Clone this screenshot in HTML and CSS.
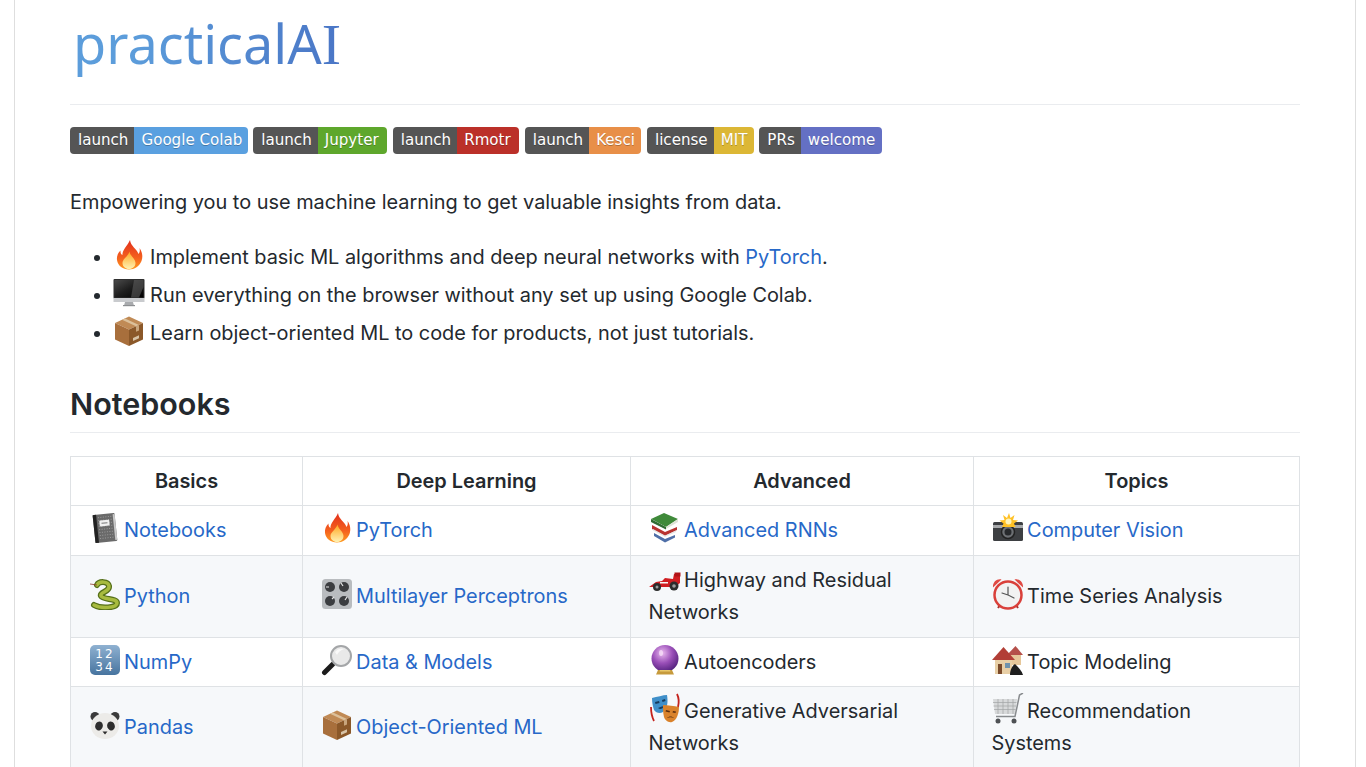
FILE: index.html
```html
<!DOCTYPE html>
<html lang="en">

<head>
    <meta charset="UTF-8">
    <meta name="viewport" content="width=device-width, initial-scale=1.0">
    <title>practicalAI</title>
    <link rel="stylesheet" href="styles.css">
</head>

<body>
    <!-- emoji drawings, used with <use> further down -->
    <svg class="sprite" xmlns="http://www.w3.org/2000/svg">
        <defs>
            <linearGradient id="flameOut" x1="0" y1="0" x2="0" y2="1">
                <stop offset="0" stop-color="#e2301c" />
                <stop offset="0.6" stop-color="#f4601e" />
                <stop offset="1" stop-color="#ff9a1f" />
            </linearGradient>
            <linearGradient id="flameIn" x1="0" y1="0" x2="0" y2="1">
                <stop offset="0" stop-color="#ffa51f" />
                <stop offset="1" stop-color="#fff2b4" />
            </linearGradient>
            <linearGradient id="screenDark" x1="0" y1="0" x2="1" y2="1">
                <stop offset="0" stop-color="#4a4a4a" />
                <stop offset="0.5" stop-color="#1d1d1d" />
                <stop offset="1" stop-color="#000" />
            </linearGradient>
            <linearGradient id="keyBlue" x1="0" y1="0" x2="0" y2="1">
                <stop offset="0" stop-color="#8fb1d1" />
                <stop offset="1" stop-color="#47749f" />
            </linearGradient>
            <radialGradient id="ballPurple" cx="0.4" cy="0.3" r="0.75">
                <stop offset="0" stop-color="#e9b8ef" />
                <stop offset="0.5" stop-color="#9a4fb8" />
                <stop offset="1" stop-color="#4c1d78" />
            </radialGradient>
        </defs>

        <symbol id="e-fire" viewBox="0 0 32 32">
            <path fill="url(#flameOut)" d="M17 1c.5 6 6.500 8.500 8.500 14 1.500-2 1.500-4 1-6 3 4 3.500 9 2 13-2 5-7 8.500-12.500 8.500-6 0-11-3.500-12-9.500-.5-4 1-7 3.500-9.500-.2 2 .5 4 2 4.500C9 11 14.500 7 17 1z" />
            <path fill="url(#flameIn)" d="M16.500 12.500c.5 4.500 6 7 6 11.500 0 3.500-3 6-6.500 6s-6.500-2.500-6.500-6c0-4 5.500-6.500 7-11.500z" />
        </symbol>

        <symbol id="e-imac" viewBox="0 0 32 32">
            <rect x="0.500" y="2" width="31" height="19.500" rx="1" fill="#303030" />
            <rect x="1.500" y="3" width="29" height="17.500" fill="url(#screenDark)" />
            <path fill="#6a6a6a" opacity="0.5" d="M21 3h9.500v7L26 20.500h-8z" />
            <rect x="0.500" y="21" width="31" height="4" fill="#c9cbce" />
            <path fill="#a9abae" d="M12 25h8l.8 3h-9.600z" />
            <rect x="10" y="28" width="12" height="1.200" fill="#8d8f92" />
        </symbol>

        <symbol id="e-box" viewBox="0 0 32 32">
            <path fill="#c08a55" d="M16 1.500 30 8 16 14.500 2 8z" />
            <path fill="#a86f3c" d="M2 8l14 6.500V31L2 24.500z" />
            <path fill="#8b5829" d="M30 8 16 14.500V31l14-6.500z" />
            <path fill="#dcc09a" d="M9 4.800l14 6.500 3-1.400-14-6.500z" />
            <path fill="#c9a57c" d="M23 11.300l3-1.400v5.500l-3 1.400z" />
            <path fill="#d8c3a6" d="M20 23l6-2.800v3l-6 2.800z" />
        </symbol>

        <symbol id="e-notebook" viewBox="0 0 32 32">
            <g transform="rotate(-6 16 16)">
                <rect x="5" y="2" width="22" height="28" rx="1" fill="#6a6a6a" />
                <rect x="5" y="2" width="3.500" height="28" fill="#222" />
                <rect x="25" y="3" width="2" height="26" fill="#c9c9c9" />
                <path stroke="#a5a5a5" stroke-width="0.800" stroke-dasharray="1 1.500" d="M10 5h15M10 8h15M10 11h15M10 14h15M10 17h15M10 20h15M10 23h15M10 26h15" />
                <rect x="11" y="8" width="10" height="6" rx="1" fill="#efefef" />
                <rect x="13" y="10.500" width="6" height="1" fill="#777" />
            </g>
        </symbol>

        <symbol id="e-snake" viewBox="0 0 32 32">
            <path fill="none" stroke="#56701a" stroke-width="6" stroke-linecap="round" d="M5 27C12 31 28 30 28 25 28 20 14 22 12 18 10 14 21 14 20 8 19 3 10 3 8 7" />
            <path fill="none" stroke="#a8bb3f" stroke-width="3.500" stroke-linecap="round" d="M5 27C12 31 28 30 28 25 28 20 14 22 12 18 10 14 21 14 20 8 19 3 10 3 8 7" />
            <path stroke="#8c3b2c" stroke-width="0.800" d="M8 7 1 6" />
        </symbol>

        <symbol id="e-knobs" viewBox="0 0 32 32">
            <rect x="1" y="1" width="30" height="30" rx="3.500" fill="#b9bcbf" />
            <circle cx="9" cy="9" r="5" fill="#3b3d40" />
            <circle cx="23" cy="9" r="5" fill="#3b3d40" />
            <circle cx="9" cy="23" r="5" fill="#3b3d40" />
            <circle cx="23" cy="23" r="5" fill="#3b3d40" />
            <path stroke="#e6e6e6" stroke-width="1.200" d="M5 9h3M22 8l-2-3M11 21l2-2M24 22l2-3" />
        </symbol>

        <symbol id="e-lens" viewBox="0 0 32 32">
            <path stroke="#1c1c1c" stroke-width="5" stroke-linecap="round" d="M3.500 28.500l8-8" />
            <circle cx="20" cy="12" r="10" fill="#e9e9e9" stroke="#a4a6a8" stroke-width="2" />
            <path fill="#fafafa" d="M14 8c2-3 6-4 9-3-3 1-6 3-7 6z" />
        </symbol>

        <symbol id="e-panda" viewBox="0 0 32 32">
            <circle cx="6" cy="7.500" r="4.500" fill="#3a3a3a" />
            <circle cx="26" cy="7.500" r="4.500" fill="#3a3a3a" />
            <ellipse cx="16" cy="17" rx="14" ry="13" fill="#ecebe8" />
            <ellipse cx="10" cy="17" rx="3.800" ry="4.500" fill="#2d2d2d" transform="rotate(20 10 17)" />
            <ellipse cx="22" cy="17" rx="3.800" ry="4.500" fill="#2d2d2d" transform="rotate(-20 22 17)" />
            <path fill="#2d2d2d" d="M13.500 22.500h5L16 25.500z" />
        </symbol>

        <symbol id="e-books" viewBox="0 0 32 32">
            <path fill="#3f8a3a" d="M2 7 15 1l14 6-12 8z" />
            <path fill="#dfe3d8" d="M4 8 17 15l12-8v3l-12 7L4 11z" />
            <path fill="#2f6c32" d="M2 7l15 8v2.500L2 10z" />
            <path fill="#b83330" d="M3 13l13 7 12-5v3l-12 6-13-7z" />
            <path fill="#e6e6e6" d="M4 17l12 6.500 11-5v1.500l-11 5-12-6.500z" />
            <path fill="#4f6fa8" d="M5 21l11 6 10-4v2.500l-10 5-11-6.500z" />
        </symbol>

        <symbol id="e-camera" viewBox="0 0 32 32">
            <rect x="1" y="10" width="30" height="19" rx="1.500" fill="#3d3f42" />
            <rect x="1" y="13" width="30" height="3" fill="#a7a9ab" />
            <circle cx="16" cy="20" r="6.500" fill="#6d7074" stroke="#222" stroke-width="1.500" />
            <circle cx="16" cy="20" r="3.500" fill="#27292c" />
            <path fill="#ffc125" d="M17 1l1.500 5 4-3-1.500 5 5 .5-4 3 1.500 3.500H10l1.500-3.500-4-3 5-.5L11 3l4 3z" />
            <circle cx="16.500" cy="9.500" r="3" fill="#fff3b8" />
        </symbol>

        <symbol id="e-car" viewBox="0 0 32 32">
            <path fill="#d01d21" d="M0 25l7-5 6-1 3-3 8 1 1-5h6v9l-5 4H4z" />
            <rect x="25.500" y="10.500" width="6" height="4" fill="#b01418" />
            <path fill="#f6f6f6" d="M11 20h8v1.500h-8z" />
            <circle cx="8" cy="25" r="4" fill="#2b2b2b" />
            <circle cx="25" cy="24" r="4.500" fill="#2b2b2b" />
            <circle cx="8" cy="25" r="1.500" fill="#9b9b9b" />
            <circle cx="25" cy="24" r="1.800" fill="#9b9b9b" />
        </symbol>

        <symbol id="e-clock" viewBox="0 0 32 32">
            <path stroke="#a8302c" stroke-width="2" d="M8 27l-2 3M24 27l2 3" />
            <circle cx="16" cy="17" r="13.500" fill="#f2f2f2" stroke="#d9403a" stroke-width="2.500" />
            <path fill="#e04a43" d="M1 9.500C.5 4.500 4.500.5 9.500 1.500zM31 9.500C31.500 4.500 27.500.5 22.500 1.500z" />
            <path fill="none" stroke="#555" stroke-width="1.200" stroke-linecap="round" d="M16 9v8l6 3M16 17l-6-2" />
        </symbol>

        <symbol id="e-ball" viewBox="0 0 32 32">
            <circle cx="16" cy="14.500" r="13.500" fill="url(#ballPurple)" />
            <ellipse cx="12" cy="9" rx="2" ry="3" fill="#f6def8" opacity="0.8" />
            <path fill="#c69a3c" d="M9 26h14l2 4.500H7z" />
            <path fill="#e8c76a" d="M11 26h10l.5 1.500h-11z" />
        </symbol>

        <symbol id="e-houses" viewBox="0 0 32 32">
            <path fill="#e6c79a" d="M18 9h11v12H18z" />
            <path fill="#b5504a" d="M15 11l8.500-9L31 11z" />
            <path fill="#e8cfa6" d="M3 15h17v15H3z" />
            <path fill="#b23e36" d="M0 16 11.500 3 23 16z" />
            <rect x="6" y="20" width="4" height="10" fill="#7a4a2a" />
            <rect x="13" y="19" width="5" height="5" fill="#6f93ad" />
            <path fill="#1e1e1e" d="M18 31c0-5 2-9 5-11 3 3 7 7 8 11z" />
        </symbol>

        <symbol id="e-masks" viewBox="0 0 32 32">
            <path fill="none" stroke="#c4231d" stroke-width="1.800" d="M2 14c0 6 1 10 3 14M28 1c2 4 2 9 1 13" />
            <path fill="#3f8fc9" d="M3 5c5-1 11-3 15-3 1 6 1 13-4 17-3 2-7 1-9-2-1-3-2-7-2-12z" />
            <path fill="#163a5c" d="M6 9l4-1 .5 2-4 1zM13 7l3-1 .5 2-3 1zM9 15c2-1 4-1.500 6-2-1 3-4 4-6 2z" />
            <path fill="#d9822b" d="M14 12c5 0 11 1 16 2 0 6-2 13-7 15-4 1-7-2-8-5-1-4-1-8-1-12z" />
            <path fill="#5a2e0f" d="M17 17l4 1-.5 1.500-4-1zM24 18l3 .5-.5 1.500-3-.5zM18 25c2-2 5-2 7 0-2-1-5-1-7 0z" />
        </symbol>

        <symbol id="e-cart" viewBox="0 0 32 32">
            <path fill="#d7d9da" d="M1 6h24l-2 15H3z" />
            <path stroke="#a0a3a5" stroke-width="0.700" d="M1 9.500h23.500M1.500 13h22.500M2 16.500h21.500M6 6v15M11 6v15M16 6v15M21 6v15" />
            <path fill="none" stroke="#888b8e" stroke-width="1.500" d="M31 0l-3.500 2-4.500 21.500H4" />
            <circle cx="6" cy="28" r="2.500" fill="#4e5154" />
            <circle cx="22" cy="28" r="2.500" fill="#4e5154" />
        </symbol>
    </svg>

    <div class="readme">
        <h1 class="title">practicalA<span class="title-i">I</span></h1>

        <div class="badges">
            <span class="badge"><span class="badge-key">launch</span><span class="badge-val colab">Google Colab</span></span>
            <span class="badge"><span class="badge-key">launch</span><span class="badge-val jupyter">Jupyter</span></span>
            <span class="badge"><span class="badge-key">launch</span><span class="badge-val rmotr">Rmotr</span></span>
            <span class="badge"><span class="badge-key">launch</span><span class="badge-val kesci">Kesci</span></span>
            <span class="badge"><span class="badge-key">license</span><span class="badge-val mit">MIT</span></span>
            <span class="badge"><span class="badge-key">PRs</span><span class="badge-val prs">welcome</span></span>
        </div>

        <p class="intro">Empowering you to use machine learning to get valuable insights from data.</p>

        <ul class="points">
            <li><svg class="emoji"><use href="#e-fire" /></svg> Implement basic ML algorithms and deep neural networks with <a href="#">PyTorch</a>.</li>
            <li><svg class="emoji"><use href="#e-imac" /></svg> Run everything on the browser without any set up using Google Colab.</li>
            <li><svg class="emoji"><use href="#e-box" /></svg> Learn object-oriented ML to code for products, not just tutorials.</li>
        </ul>

        <h2 class="section">Notebooks</h2>

        <table class="notebooks">
            <colgroup>
                <col class="col-a">
                <col class="col-b">
                <col class="col-c">
                <col class="col-d">
            </colgroup>
            <thead>
                <tr>
                    <th>Basics</th>
                    <th>Deep Learning</th>
                    <th>Advanced</th>
                    <th>Topics</th>
                </tr>
            </thead>
            <tbody>
                <tr>
                    <td><svg class="emoji"><use href="#e-notebook" /></svg> <a href="#">Notebooks</a></td>
                    <td><svg class="emoji"><use href="#e-fire" /></svg> <a href="#">PyTorch</a></td>
                    <td><svg class="emoji"><use href="#e-books" /></svg> <a href="#">Advanced RNNs</a></td>
                    <td><svg class="emoji"><use href="#e-camera" /></svg> <a href="#">Computer Vision</a></td>
                </tr>
                <tr>
                    <td><svg class="emoji"><use href="#e-snake" /></svg> <a href="#">Python</a></td>
                    <td><svg class="emoji"><use href="#e-knobs" /></svg> <a href="#">Multilayer Perceptrons</a></td>
                    <td><svg class="emoji"><use href="#e-car" /></svg> Highway and Residual Networks</td>
                    <td><svg class="emoji"><use href="#e-clock" /></svg> Time Series Analysis</td>
                </tr>
                <tr class="row-tight">
                    <td><svg class="emoji" viewBox="0 0 32 32"><rect x="1" y="1" width="30" height="30" rx="5" fill="url(#keyBlue)" /><text x="16" y="14" class="emoji-digits" text-anchor="middle">12</text><text x="16" y="27" class="emoji-digits" text-anchor="middle">34</text></svg> <a href="#">NumPy</a></td>
                    <td><svg class="emoji"><use href="#e-lens" /></svg> <a href="#">Data &amp; Models</a></td>
                    <td><svg class="emoji"><use href="#e-ball" /></svg> Autoencoders</td>
                    <td><svg class="emoji"><use href="#e-houses" /></svg> Topic Modeling</td>
                </tr>
                <tr>
                    <td><svg class="emoji"><use href="#e-panda" /></svg> <a href="#">Pandas</a></td>
                    <td><svg class="emoji"><use href="#e-box" /></svg> <a href="#">Object-Oriented ML</a></td>
                    <td><svg class="emoji"><use href="#e-masks" /></svg> Generative Adversarial Networks</td>
                    <td><svg class="emoji"><use href="#e-cart" /></svg> Recommendation<br>Systems</td>
                </tr>
            </tbody>
        </table>
    </div>
</body>

</html>
```

FILE: styles.css
```css
html {
    overflow: hidden;
}

body {
    margin: 0;
    height: 767px;
    overflow: hidden;
    background-color: white;
    color: #24292e;
    font-family: Inter, "Liberation Sans", sans-serif;
    font-size: 19.9px;
    line-height: 32px;
}

a {
    color: #2768c8;
    text-decoration: none;
}

.sprite {
    display: block;
    width: 0;
    height: 0;
}

.emoji {
    width: 32px;
    height: 32px;
    margin: -4px -2px -4px 0;
    vertical-align: -3px;
}

.points .emoji {
    margin-right: -0.500px;
}

.emoji-digits {
    fill: white;
    font-family: "DejaVu Sans", sans-serif;
    font-size: 12px;
    letter-spacing: 2px;
}

.readme {
    width: 1230px;
    min-height: 767px;
    margin-left: 14px;
    padding: 0 55px;
    border-left: 1px solid #dedede;
    border-right: 1px solid #dedede;
}

.title {
    margin: 0;
    padding: 0 0 18px 3px;
    border-bottom: 1px solid #eaecef;
    font-family: "Noto Sans", sans-serif;
    font-size: 54px;
    font-weight: 400;
    line-height: 86px;
    background: linear-gradient(90deg, #5c9ddb 60px, #4a76c6 270px);
    -webkit-background-clip: text;
    background-clip: text;
    color: transparent;
}

.title-i {
    font-family: "Liberation Serif", serif;
    font-size: 58px;
    line-height: 0;
}

.badges {
    display: flex;
    gap: 5.500px;
    margin-top: 22px;
}

.badge {
    display: flex;
    height: 27px;
    overflow: hidden;
    border-radius: 4px;
    color: white;
    font-family: "DejaVu Sans", Verdana, sans-serif;
    font-size: 15.1px;
    line-height: 27px;
    text-shadow: 0 1px 0 rgba(0, 0, 0, 0.25);
}

.badge-key {
    padding: 0 6px 0 8px;
    background-color: #555;
}

.badge-val {
    padding: 0 6.500px 0 7px;
}

.colab {
    padding-right: 5.500px;
    background-color: #5aa0e0;
}

.jupyter {
    padding-right: 8.500px;
    background-color: #5ea72c;
}

.rmotr {
    padding-right: 8.500px;
    background-color: #bb3029;
}

.kesci {
    background-color: #e88f48;
}

.mit {
    background-color: #dcb735;
}

.prs {
    background-color: #6470c4;
}

.intro {
    margin: 32px 0 0;
}

.points {
    margin: 23px 0 0;
    padding-left: 43px;
}

.points li + li {
    margin-top: 6px;
}

.section {
    margin: 35px 0 0;
    padding-bottom: 8px;
    border-bottom: 1px solid #eaecef;
    font-size: 30.500px;
    font-weight: 600;
    line-height: 40px;
}

.notebooks {
    width: 1229px;
    margin-top: 23px;
    border-collapse: collapse;
    table-layout: fixed;
}

.col-a {
    width: 232px;
}

.col-b {
    width: 328px;
}

.col-c {
    width: 343px;
}

.col-d {
    width: 326px;
}

.notebooks th,
.notebooks td {
    padding: 8px 17.500px 9px;
    border: 1px solid #dfe2e5;
}

.notebooks th,
.notebooks .row-tight td {
    padding-top: 8px;
    padding-bottom: 8px;
}

.notebooks th {
    font-weight: 600;
    text-align: center;
}

.notebooks tbody tr:nth-child(even) {
    background-color: #f6f8fa;
}
```
